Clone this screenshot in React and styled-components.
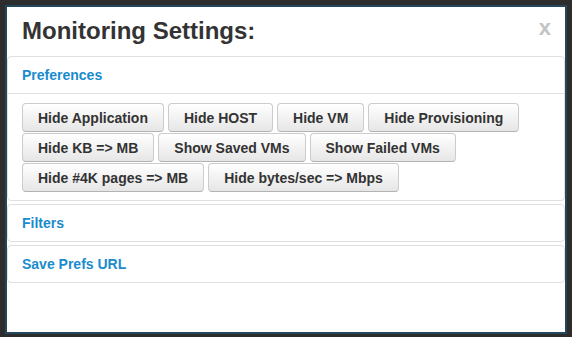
import React from "react";
import styled, { createGlobalStyle } from "styled-components";

const GlobalStyle = createGlobalStyle`
  body {
    margin: 0;
    background: #2d2d2d;
    font-family: "Liberation Sans", Arial, Helvetica, sans-serif;
  }
`;

const Page = styled.div`
  padding: 5px;
  height: 337px;
  box-sizing: border-box;
`;

const Modal = styled.div`
  width: 562px;
  height: 329px;
  box-sizing: border-box;
  border: 2px solid #24475b;
  background: #fff;
  display: flex;
  flex-direction: column;
`;

const Header = styled.div`
  display: flex;
  justify-content: space-between;
  align-items: flex-start;
  padding: 9px 14px 11px 15px;
`;

const Title = styled.h2`
  margin: 0;
  font-size: 24px;
  line-height: 29px;
  font-weight: bold;
  color: #333;
`;

const Close = styled.span`
  font-size: 22px;
  line-height: 23px;
  font-weight: bold;
  color: #c4c4c4;
  cursor: pointer;
`;

const Panel = styled.div`
  border: 1px solid #e0e0e0;
  border-radius: 4px;
  & + & {
    margin-top: 3px;
  }
`;

const PanelHeading = styled.div`
  padding: 8px 14px;
  line-height: 20px;
  font-size: 14px;
  font-weight: bold;
  color: #1a8bcd;
  border-bottom: ${(p) => (p.$open ? "1px solid #e0e0e0" : "none")};
`;

const PanelBody = styled.div`
  padding: 9px 14px 8px 14px;
  display: flex;
  flex-direction: column;
  gap: 1px;
`;

const ButtonRow = styled.div`
  display: flex;
  gap: 4px;
`;

const Button = styled.button`
  height: 29px;
  padding: 0 15px;
  font-family: inherit;
  font-size: 14px;
  font-weight: bold;
  color: #333;
  background: linear-gradient(to bottom, #ffffff, #e6e6e6);
  border: 1px solid #cccccc;
  border-bottom-color: #b3b3b3;
  border-radius: 4px;
  box-shadow: inset 0 1px 0 rgba(255, 255, 255, 0.2);
`;

const rows = [
  ["Hide Application", "Hide HOST", "Hide VM", "Hide Provisioning"],
  ["Hide KB => MB", "Show Saved VMs", "Show Failed VMs"],
  ["Hide #4K pages => MB", "Hide bytes/sec => Mbps"],
];

export default function App() {
  return (
    <>
      <GlobalStyle />
      <Page>
        <Modal>
          <Header>
            <Title>Monitoring Settings:</Title>
            <Close>x</Close>
          </Header>
          <Panel>
            <PanelHeading $open>Preferences</PanelHeading>
            <PanelBody>
              {rows.map((row, i) => (
                <ButtonRow key={i}>
                  {row.map((label) => (
                    <Button key={label}>{label}</Button>
                  ))}
                </ButtonRow>
              ))}
            </PanelBody>
          </Panel>
          <Panel>
            <PanelHeading>Filters</PanelHeading>
          </Panel>
          <Panel>
            <PanelHeading>Save Prefs URL</PanelHeading>
          </Panel>
        </Modal>
      </Page>
    </>
  );
}
